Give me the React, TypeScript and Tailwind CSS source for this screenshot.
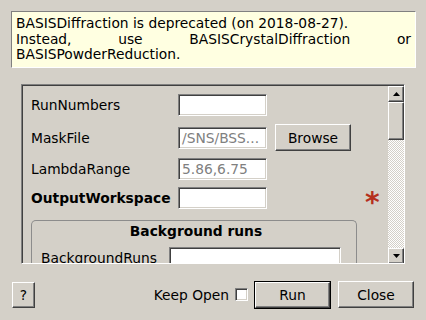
import React from "react";

const raised =
  "bg-[#d4d0c8] border border-t-white border-l-white border-r-[#404040] border-b-[#404040] shadow-[inset_-1px_-1px_0_#808080]";
const sunken =
  "bg-white border border-t-[#808080] border-l-[#808080] border-r-white border-b-white shadow-[inset_1px_1px_0_#404040,inset_-1px_-1px_0_#d4d0c8]";

function Field({ w, value }: { w: number; value?: string }) {
  return (
    <div
      className={`${sunken} h-[22px] flex items-center pl-[3px] pr-[2px] text-[#808080] overflow-hidden whitespace-nowrap`}
      style={{ width: w }}
    >
      {value}
    </div>
  );
}

export default function App() {
  return (
    <div
      className="w-[426px] h-[320px] bg-[#d4d0c8] text-black text-[13.8px] leading-[16px] flex flex-col overflow-hidden"
      style={{ fontFamily: '"DejaVu Sans", sans-serif' }}
    >
      {/* Notice */}
      <div className="ml-[11px] mt-[11px] w-[405px] h-[57px] bg-[#ffffe1] border border-t-[#808080] border-l-[#808080] border-r-white border-b-white px-[4px] pt-[4px] leading-[15.5px] text-justify">
        BASISDiffraction is deprecated (on 2018-08-27).
        <br />
        Instead, use BASISCrystalDiffraction or BASISPowderReduction.
      </div>

      {/* Scroll area */}
      <div className="ml-[21px] mt-[16px] w-[384px] h-[180px] border border-t-[#808080] border-l-[#808080] border-r-white border-b-white shadow-[inset_1px_1px_0_#404040] pt-px pl-px flex overflow-hidden">
        <div className="flex-1 flex flex-col pl-[8px] pt-[8px] overflow-hidden">
          <div className="flex items-center h-[22px]">
            <div className="w-[147px]">RunNumbers</div>
            <Field w={89} />
          </div>
          <div className="flex items-center h-[27px] mt-[8px]">
            <div className="w-[147px]">MaskFile</div>
            <Field w={89} value="/SNS/BSS..." />
            <div className={`${raised} ml-[8px] w-[76px] h-[27px] flex items-center justify-center`}>
              Browse
            </div>
          </div>
          <div className="flex items-center h-[22px] mt-[7px]">
            <div className="w-[147px]">LambdaRange</div>
            <Field w={89} value="5.86,6.75" />
          </div>
          <div className="flex items-center h-[22px] mt-[7px]">
            <div className="w-[147px] font-bold">OutputWorkspace</div>
            <Field w={89} />
            <div className="ml-[98px] text-[#b5301e] font-bold text-[28px] leading-[22px] pt-[10px]">*</div>
          </div>
          <div className="mt-[11px] w-[326px] shrink-0 border border-[#8c8c8c] rounded-t-[5px] border-b-0 h-[60px] flex flex-col">
            <div className="text-center font-bold pt-[2px] h-[19px] pl-[4px]">Background runs</div>
            <div className="flex items-center mt-[7px] pl-[9px]">
              <div className="w-[128px] shrink-0 whitespace-nowrap">BackgroundRuns</div>
              <Field w={172} />
            </div>
          </div>
        </div>
        {/* Scrollbar */}
        <div className="w-[16px] flex flex-col h-[178px]">
          <div className={`${raised} h-[16px] flex items-center justify-center`}>
            <svg width="7" height="4" viewBox="0 0 7 4"><polygon points="3.5,0 7,4 0,4" fill="#000" /></svg>
          </div>
          <div className={`${raised} h-[38px]`} />
          <div className="flex-1 bg-[conic-gradient(#ffffff_25%,#d4d0c8_0_50%,#ffffff_0_75%,#d4d0c8_0)] bg-[length:2px_2px]" />
          <div className={`${raised} h-[16px] flex items-center justify-center`}>
            <svg width="7" height="4" viewBox="0 0 7 4"><polygon points="0,0 7,0 3.5,4" fill="#000" /></svg>
          </div>
        </div>
      </div>

      {/* Bottom bar */}
      <div className="mt-[17px] flex items-center h-[27px] pr-[12px]">
        <div className={`${raised} ml-[12px] w-[23px] h-[26px] flex items-center justify-center`}>?</div>
        <div className="flex-1" />
        <div>Keep Open</div>
        <div className={`${sunken} ml-[6px] w-[13px] h-[13px]`} />
        <div className="ml-[6px] border border-black w-[77px] h-[28px]">
          <div className={`${raised} w-full h-full flex items-center justify-center`}>Run</div>
        </div>
        <div className={`${raised} ml-[7px] w-[76px] h-[27px] flex items-center justify-center`}>Close</div>
      </div>
    </div>
  );
}
